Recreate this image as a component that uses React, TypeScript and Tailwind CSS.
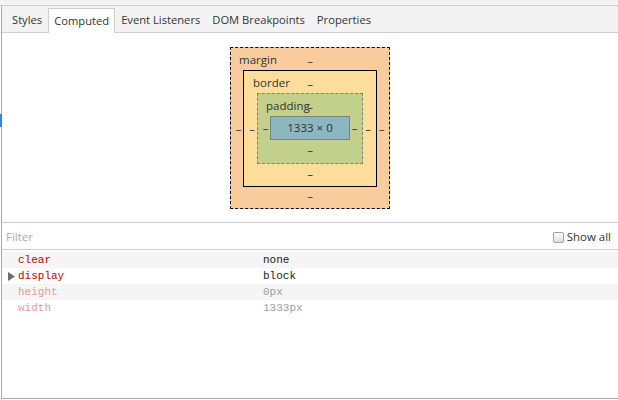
const UI = { fontFamily: '"Open Sans", "Noto Sans", sans-serif' };
const MONO = { fontFamily: '"Liberation Mono", "DejaVu Sans Mono", monospace' };

const tabs = ["Styles", "Computed", "Event Listeners", "DOM Breakpoints", "Properties"];

const props = [
  { name: "clear", value: "none", faded: false, expandable: false },
  { name: "display", value: "block", faded: false, expandable: true },
  { name: "height", value: "0px", faded: true, expandable: false },
  { name: "width", value: "1333px", faded: true, expandable: false },
];

function Dash() {
  return <span>–</span>;
}

function BoxModel() {
  return (
    <div className="relative flex flex-col border border-dashed border-black bg-[#f9cc9d] p-[3px] text-center text-[11.5px] text-[#333]">
      <span className="absolute left-[8px] top-[4px] leading-[16px]">margin</span>
      <div className="h-[19px] leading-[19px]"><Dash /></div>
      <div className="flex items-center">
        <div className="w-[9px] leading-[16px]"><Dash /></div>
        <div className="relative flex flex-col border border-black bg-[#fddd9b] p-[3px]">
          <span className="absolute left-[9px] top-[4px] leading-[16px]">border</span>
          <div className="h-[19px] leading-[19px]"><Dash /></div>
          <div className="flex items-center">
            <div className="w-[10px] leading-[16px]"><Dash /></div>
            <div className="relative flex flex-col border border-dashed border-[#808080] bg-[#c3d08b] p-[3px]">
              <span className="absolute left-[8px] top-[4px] leading-[16px]">padding</span>
              <div className="h-[19px] leading-[19px]"><Dash /></div>
              <div className="flex items-center">
                <div className="w-[9px] leading-[16px]"><Dash /></div>
                <div className="flex h-[24px] w-[80px] items-center justify-center border border-[#808080] bg-[#8cb6c0]">
                  1333 × 0
                </div>
                <div className="w-[9px] leading-[16px]"><Dash /></div>
              </div>
              <div className="h-[20px] leading-[20px]"><Dash /></div>
            </div>
            <div className="w-[10px] leading-[16px]"><Dash /></div>
          </div>
          <div className="h-[19px] leading-[19px]"><Dash /></div>
        </div>
        <div className="w-[9px] leading-[16px]"><Dash /></div>
      </div>
      <div className="h-[18px] leading-[18px]"><Dash /></div>
    </div>
  );
}

export default function App() {
  return (
    <div className="relative h-[400px] w-[618px] overflow-hidden bg-white" style={UI}>
      <div className="h-[6px] border-b border-[#cdcdcd] bg-[#f3f3f3]" />
      <div className="ml-[1px] flex h-[393px] flex-col border-b border-l border-[#a9a9a9]">
        <div className="flex h-[27px] items-end border-b border-[#cdcdcd] bg-[#f3f3f3] pl-[4px] text-[11.2px] text-[#333]">
          {tabs.map((t) => (
            <div
              key={t}
              className={
                t === "Computed"
                  ? "-mb-[1px] flex h-[25px] items-center border-x border-t border-[#cdcdcd] bg-white px-[5px]"
                  : "flex h-[25px] items-center border-x border-t border-transparent px-[5px]"
              }
            >
              {t}
            </div>
          ))}
        </div>

        <div className="flex h-[189px] items-start justify-center pt-[14px]">
          <BoxModel />
        </div>

        <div className="flex h-[28px] items-center justify-between border-y border-[#cdcdcd] pl-[4px] pr-[7px] pt-[2px] text-[11.5px]">
          <span className="text-[#a9a9a9]">Filter</span>
          <label className="flex items-center gap-[3px] text-[#333]">
            <span className="h-[11px] w-[11px] rounded-[2px] border border-[#a0a0a0] bg-gradient-to-b from-white to-[#dedede]" />
            Show all
          </label>
        </div>

        <div className="pt-[2px] text-[11px]" style={MONO}>
          {props.map((p, i) => (
            <div
              key={p.name}
              className={i % 2 === 0 ? "flex h-[16px] items-center bg-[#f5f5f5] pt-[1px]" : "flex h-[16px] items-center pt-[1px]"}
            >
              <div className="flex w-[16px] justify-center pl-[2px]">
                {p.expandable && (
                  <svg width="7" height="9" viewBox="0 0 7 9">
                    <polygon points="0,0 7,4.5 0,9" fill="#6e6e6e" />
                  </svg>
                )}
              </div>
              <div className={p.faded ? "w-[245px] text-[#e69a9a]" : "w-[245px] text-[#c80000]"}>{p.name}</div>
              <div className={p.faded ? "text-[#a0a0a0]" : "text-[#222]"}>{p.value}</div>
            </div>
          ))}
        </div>
      </div>
      <div className="absolute left-0 top-[114px] h-[13px] w-[2px] bg-[#3d7fe0]" />
    </div>
  );
}
